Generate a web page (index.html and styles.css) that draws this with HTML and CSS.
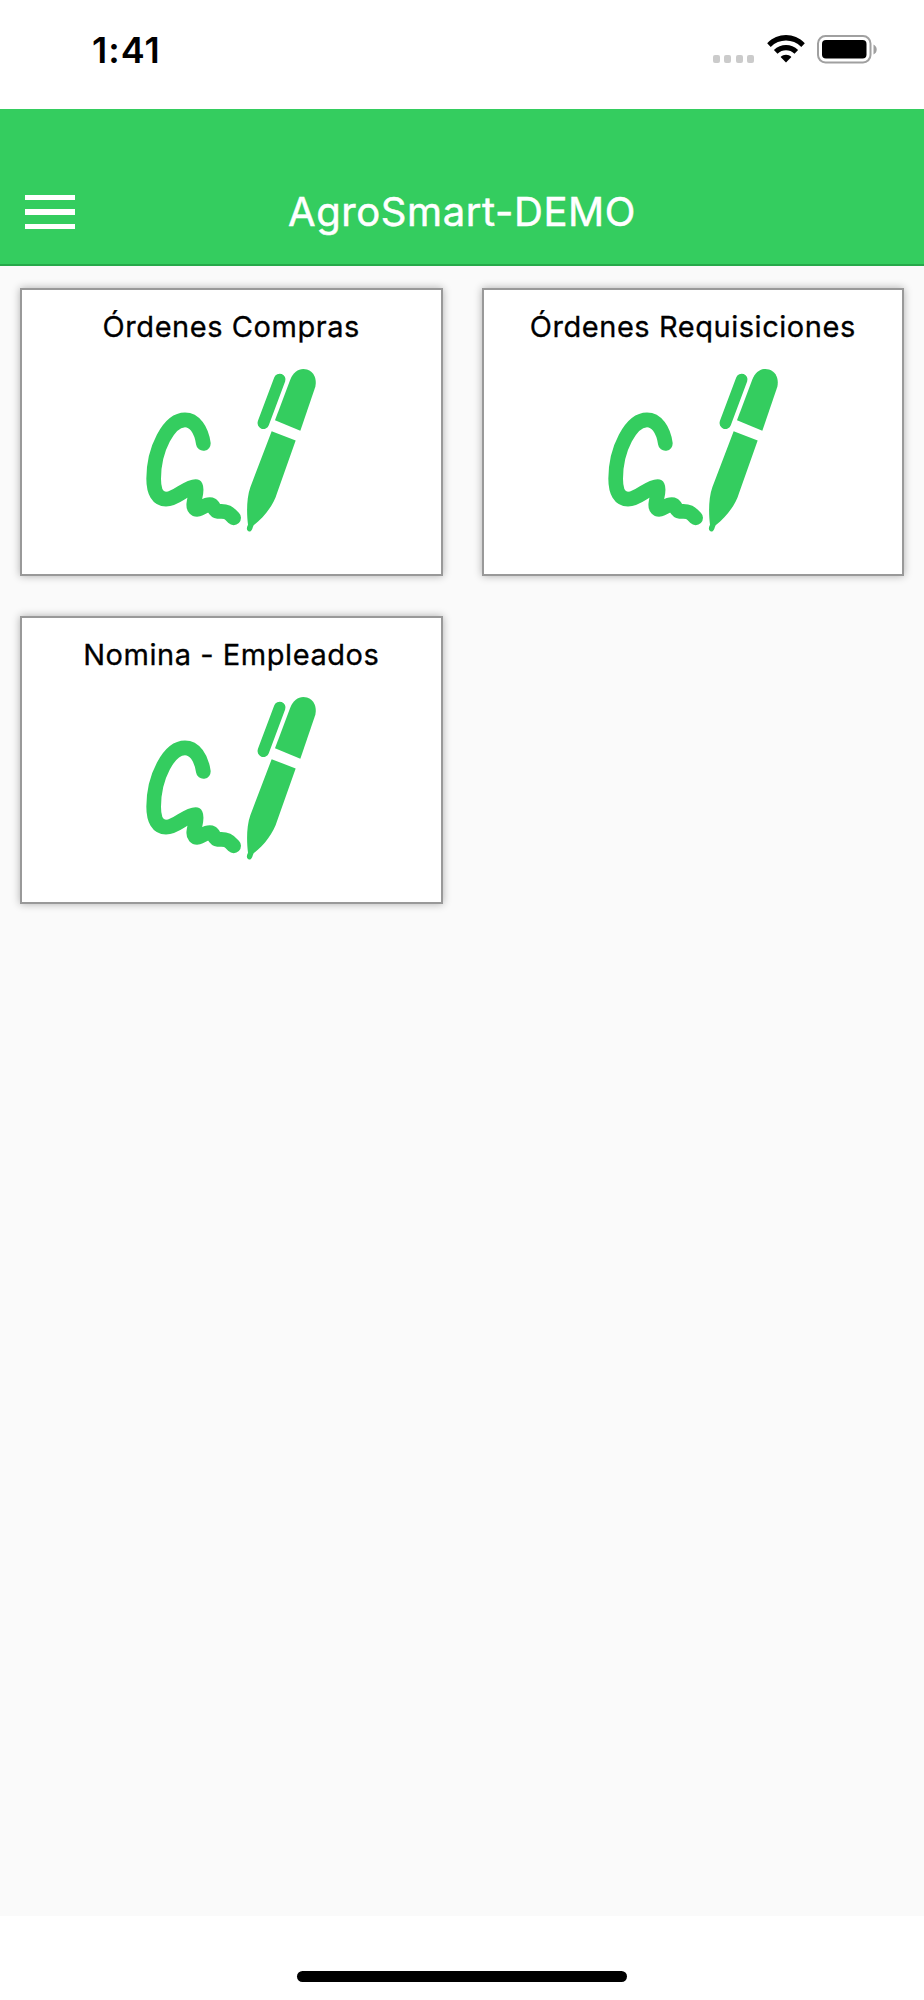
FILE: index.html
```html
<!DOCTYPE html>
<html lang="es">
	<head>
		<meta charset="utf-8">
		<title>AgroSmart-DEMO</title>
		<link rel="stylesheet" href="styles.css">
	</head>
	<body>
		<svg class="symbols" width="0" height="0">
			<symbol id="firma" viewBox="3 -1.5 600 600">
				<path class="trazo" d="M220 279C214 237 193 208 165 208C117 208 71 295 71 385C71 425 84 446 108 446C140 446 169 408 197 408C205 425 184 461 194 473C207 487 227 454 246 464C254 471 252 481 265 483C291 480 298 489 311 502"/>
				<path class="clip" d="M449 87L400 218"/>
				<path d="M481 87C491 62 510 51 531 57C552 64 561 84 556 109L511 241L435 209Z"/>
				<path d="M425 242L497 270L441 428C431 462 403 500 371 524C367 532 366 544 357 543C349 541 349 532 354 523C350 490 349 444 361 410Z"/>
			</symbol>
		</svg>
		<div class="status_bar">
			<span class="clock">1:41</span>
			<div class="status_icons">
				<div class="signal"><i></i><i></i><i></i><i></i></div>
				<svg class="wifi" width="38" height="28" viewBox="0 0 38 28">
					<path d="M0.2 8.2C10.700-2.700 27.300-2.700 37.800 8.200L34.300 11.900C25.700 3.500 12.300 3.500 3.700 11.900Z"/>
					<path d="M6.900 15.100C13.600 8.400 24.400 8.400 31.100 15.100L27.500 18.700C22.600 14.100 15.400 14.100 10.500 18.700Z"/>
					<path d="M13.600 22C16.500 19 21.500 19 24.400 22L19 27.600Z"/>
				</svg>
				<svg class="battery" width="61" height="29" viewBox="0 0 61 29">
					<rect class="battery_case" x="1" y="1" width="52.500" height="26.500" rx="7.500"/>
					<rect x="5" y="5" width="44.500" height="18.500" rx="4"/>
					<path class="battery_tip" d="M56.500 9.500C60.800 11.500 60.800 17.500 56.500 19.500Z"/>
				</svg>
			</div>
		</div>
		<div class="header">
			<div class="menu_btn"><i></i><i></i><i></i></div>
			<h1>AgroSmart-DEMO</h1>
		</div>
		<div class="main_area">
			<div class="card">
				<h2>Órdenes Compras</h2>
				<svg class="icon"><use href="#firma"/></svg>
			</div>
			<div class="card">
				<h2>Órdenes Requisiciones</h2>
				<svg class="icon"><use href="#firma"/></svg>
			</div>
			<div class="card">
				<h2>Nomina - Empleados</h2>
				<svg class="icon"><use href="#firma"/></svg>
			</div>
		</div>
		<div class="footer"><div class="home_bar"></div></div>
	</body>
</html>
```
FILE: styles.css
```css
*{box-sizing:border-box;}
body{margin:0;width:924px;height:2000px;display:flex;flex-direction:column;background:#fff;font-family:Inter,"Liberation Sans",sans-serif;color:#000;}
h1,h2{margin:0;}
.symbols{display:none;}

.status_bar{height:108.500px;flex:none;display:flex;justify-content:space-between;align-items:flex-start;padding:28px 46px 0 92px;}
.clock{font-size:36px;line-height:44px;font-weight:600;letter-spacing:1px;}
.status_icons{display:flex;align-items:flex-start;padding-top:7px;}
.signal{display:flex;gap:4.500px;margin:20px 13px 0 0;}
.signal i{width:7px;height:8px;border-radius:2px;background:#cbcbcb;}
.wifi{margin-right:12px;}
.battery_case{fill:none;stroke:#a0a0a0;stroke-width:2;}
.battery_tip{fill:#a0a0a0;}

.header{height:157.500px;flex:none;display:grid;grid-template-columns:100px 1fr 100px;align-items:start;padding-top:78.500px;background:#34cd5f;border-bottom:2px solid #27a84a;color:#fff;}
.menu_btn{display:flex;flex-direction:column;gap:9.500px;margin:7.500px 0 0 24.500px;}
.menu_btn i{width:50px;height:5.300px;background:#fff;}
.header h1{font-size:40px;line-height:50px;font-weight:400;letter-spacing:.6px;text-align:center;-webkit-text-stroke:.5px #fff;}

.main_area{flex:1;display:grid;grid-template-columns:1fr 1fr;grid-auto-rows:288px;align-content:start;gap:40px 39px;padding:22px 20px 0;background:#fafafa;}
.card{display:flex;flex-direction:column;align-items:center;background:#fff;border:2px solid #999;box-shadow:0 0 8px rgba(0,0,0,.3);}
.card h2{font-size:29px;line-height:36px;font-weight:400;letter-spacing:.55px;margin-top:19px;white-space:nowrap;-webkit-text-stroke:.3px #000;}
.icon{width:200px;height:200px;margin-top:5px;fill:#34cd5f;}
.trazo,.clip{fill:none;stroke:#34cd5f;stroke-width:44;stroke-linecap:round;stroke-linejoin:round;}
.clip{stroke-width:35;}

.footer{height:84.500px;flex:none;display:flex;justify-content:center;align-items:flex-start;padding-top:55px;}
.home_bar{width:330px;height:11.500px;border-radius:6px;background:#000;}
```
